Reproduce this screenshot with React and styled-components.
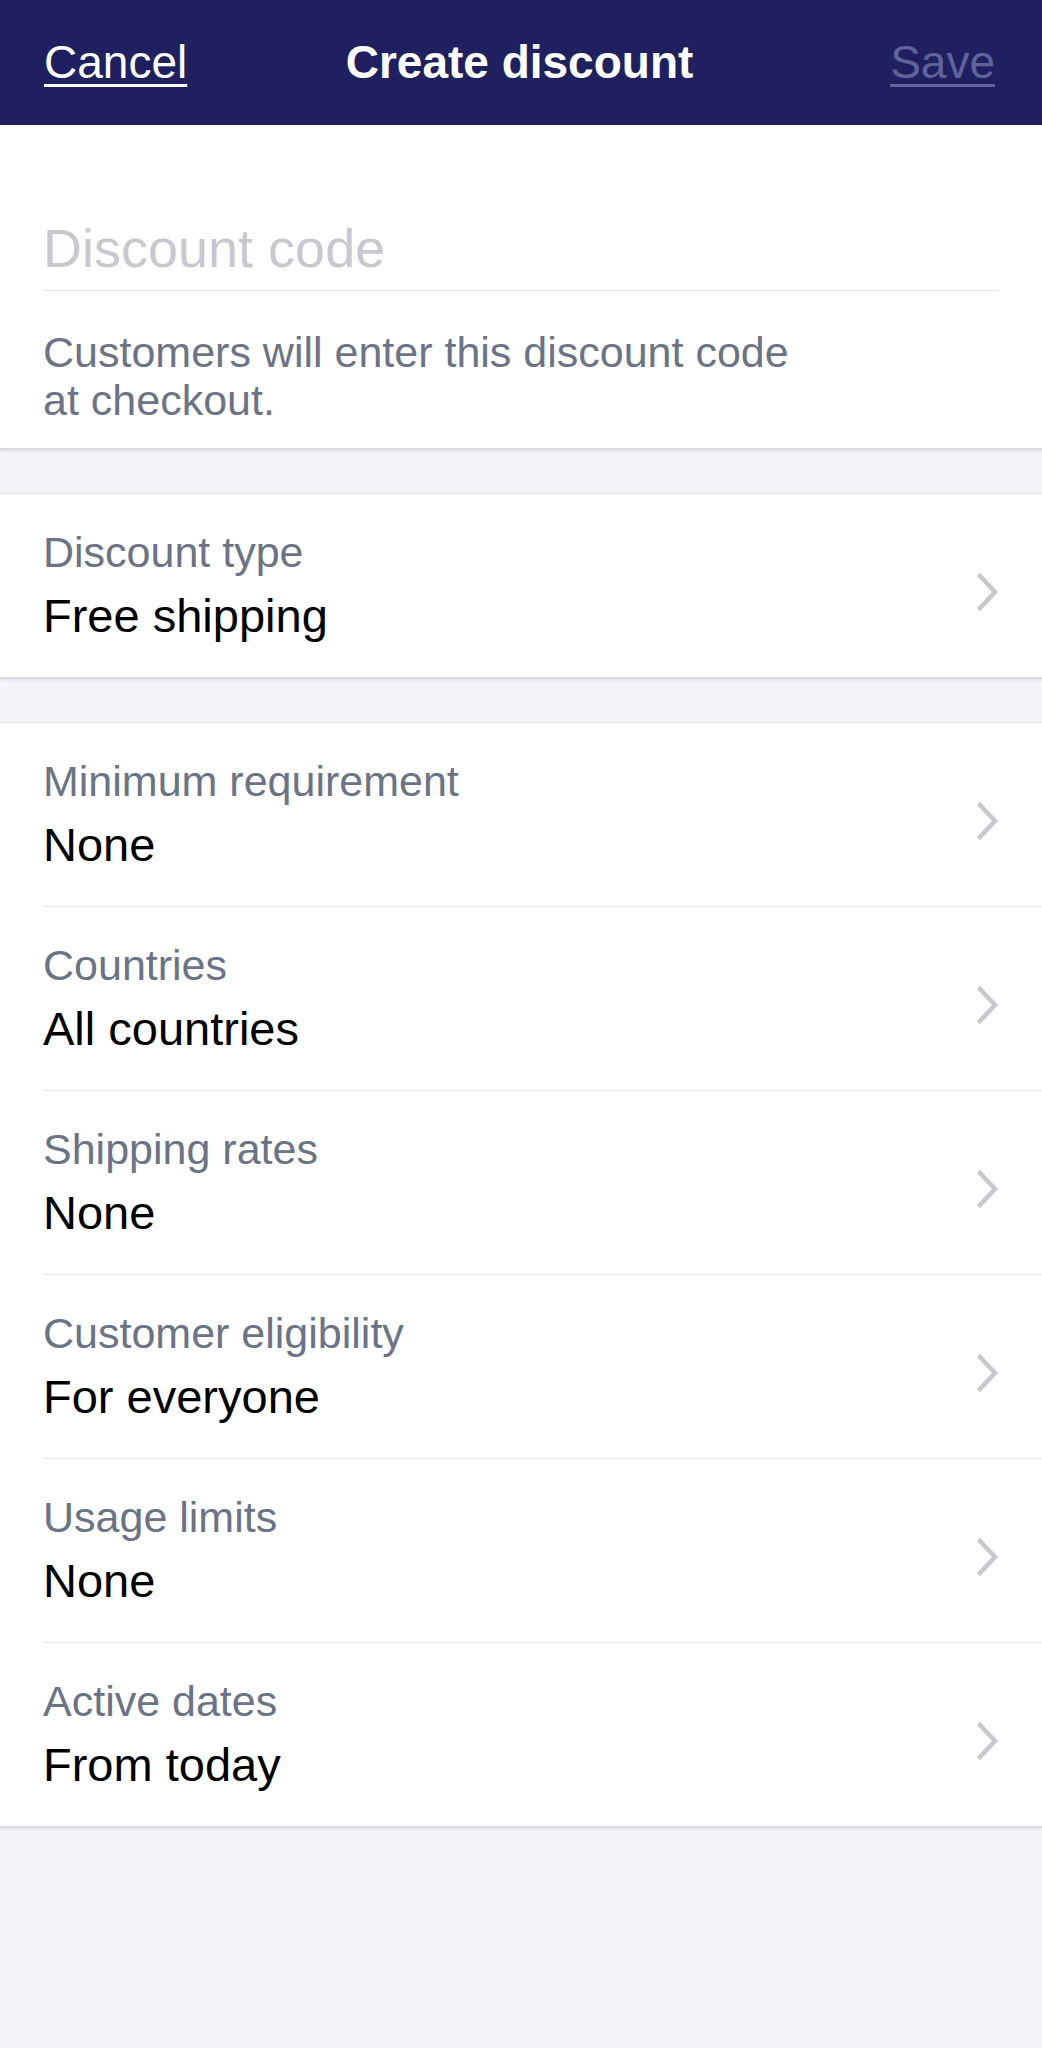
import React from "react";
import styled, { createGlobalStyle } from "styled-components";

const Global = createGlobalStyle`
  html, body { margin: 0; padding: 0; background: #f4f5f8; }
  body { font-family: "Liberation Sans", Arial, sans-serif; -webkit-font-smoothing: antialiased; }
  * { box-sizing: border-box; }
`;

const Page = styled.div`
  width: 1042px;
  min-height: 2048px;
  background: #f4f5f8;
  display: flex;
  flex-direction: column;
`;

const Header = styled.header`
  height: 125px;
  background: #1e2060;
  display: grid;
  grid-template-columns: 1fr auto 1fr;
  align-items: center;
  padding: 0 47px 2px 44px;
`;

const NavLink = styled.a`
  font-size: 46px;
  color: ${(p) => (p.$disabled ? "#5e6399" : "#ffffff")};
  text-decoration: underline;
  text-decoration-thickness: 3px;
  text-underline-offset: 6px;
  justify-self: ${(p) => (p.$end ? "end" : "start")};
  cursor: pointer;
`;

const Title = styled.h1`
  margin: 0;
  font-size: 46px;
  font-weight: 700;
  color: #ffffff;
`;

const Section = styled.section`
  background: #ffffff;
  border-top: ${(p) => (p.$first ? "none" : "1px solid #e3e5ea")};
  box-shadow: 0 2px 0 #d9dbe2, 0 4px 2px rgba(200, 203, 212, 0.35);
  margin-bottom: ${(p) => p.$gap || 0}px;
`;

const CodeBlock = styled.div`
  padding: 91px 43px 24px 43px;
`;

const CodeInput = styled.input`
  display: block;
  width: 100%;
  height: 75px;
  padding: 0 0 11px 0;
  border: none;
  border-bottom: 1px solid #e4e6ea;
  outline: none;
  font-family: inherit;
  font-size: 54px;
  line-height: 64px;
  color: #111;
  background: transparent;
  &::placeholder { color: #c8c9ce; }
`;

const Help = styled.p`
  margin: 37px 0 0 0;
  font-size: 43px;
  line-height: 48px;
  color: #6b7386;
  max-width: 760px;
`;

const Row = styled.div`
  display: flex;
  align-items: center;
  margin-left: 43px;
  padding: 34px 43px 21px 0;
  border-top: ${(p) => (p.$divider ? "1px solid #e6e7eb" : "none")};
  cursor: pointer;
`;

const RowText = styled.div`
  flex: 1;
  display: flex;
  flex-direction: column;
`;

const Label = styled.span`
  font-size: 43px;
  line-height: 48px;
  color: #6b7386;
`;

const Value = styled.span`
  font-size: 47px;
  line-height: 80px;
  color: #000;
`;

const Chevron = () => (
  <svg width="22" height="38" viewBox="0 0 22 38" fill="none">
    <path d="M3 3 L18 19 L3 35" stroke="#c7c7cc" strokeWidth="4.5" strokeLinecap="square" />
  </svg>
);

const ListRow = ({ label, value, divider }) => (
  <Row $divider={divider}>
    <RowText>
      <Label>{label}</Label>
      <Value>{value}</Value>
    </RowText>
    <Chevron />
  </Row>
);

const rows = [
  ["Minimum requirement", "None"],
  ["Countries", "All countries"],
  ["Shipping rates", "None"],
  ["Customer eligibility", "For everyone"],
  ["Usage limits", "None"],
  ["Active dates", "From today"],
];

export default function App() {
  return (
    <Page>
      <Global />
      <Header>
        <NavLink>Cancel</NavLink>
        <Title>Create discount</Title>
        <NavLink $disabled $end>Save</NavLink>
      </Header>
      <Section $first $gap={45}>
        <CodeBlock>
          <CodeInput placeholder="Discount code" />
          <Help>Customers will enter this discount code at checkout.</Help>
        </CodeBlock>
      </Section>
      <Section $gap={45}>
        <ListRow label="Discount type" value="Free shipping" />
      </Section>
      <Section>
        {rows.map(([l, v], i) => (
          <ListRow key={l} label={l} value={v} divider={i > 0} />
        ))}
      </Section>
    </Page>
  );
}
